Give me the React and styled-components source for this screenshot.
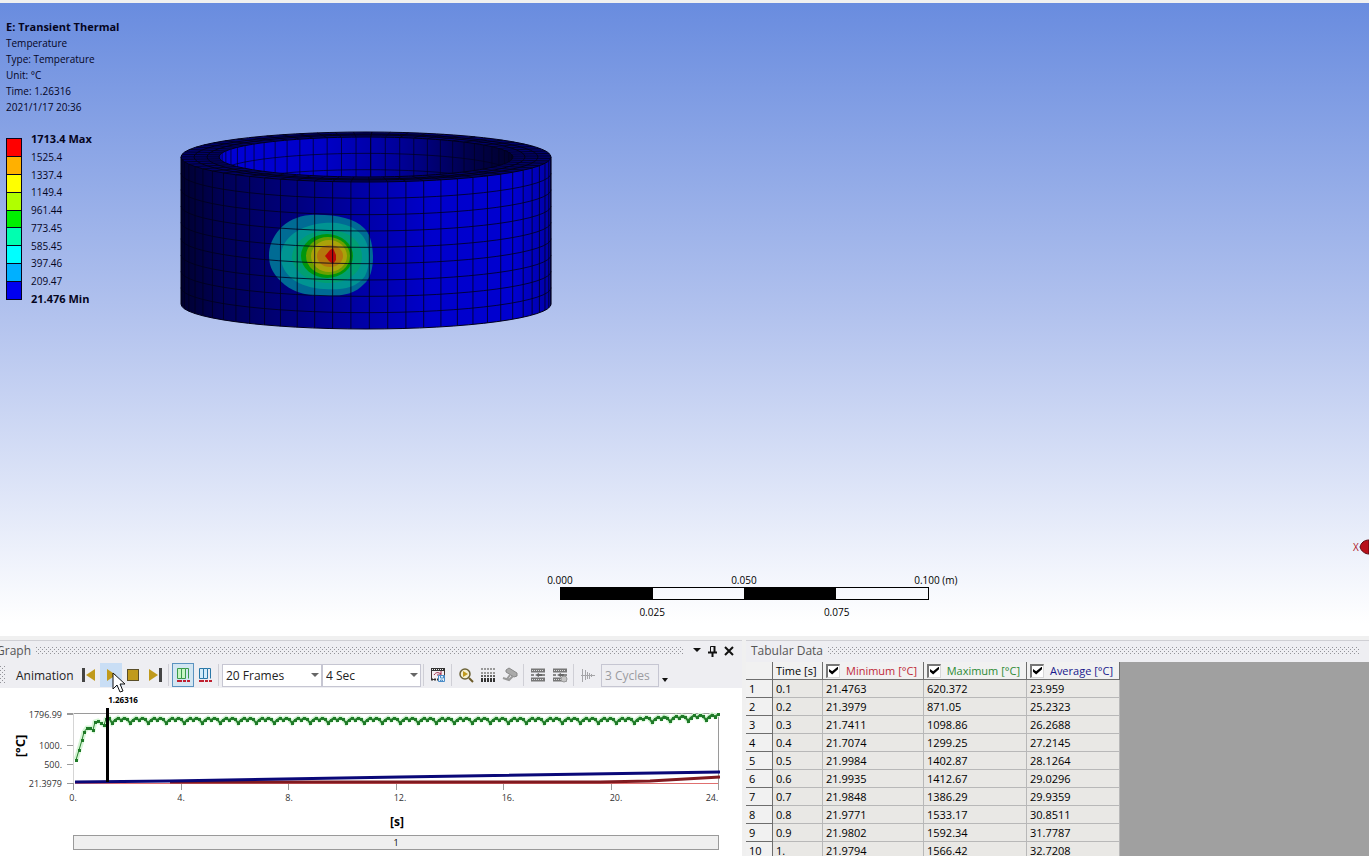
import React from "react";
import styled, { createGlobalStyle } from "styled-components";

const GlobalStyle = createGlobalStyle`
  * {
    box-sizing: border-box;
  }

  body {
    margin: 0;
    font-family: "Open Sans", "Noto Sans", sans-serif;
    font-size: 11px;
    color: #000;
  }
`;

const Page = styled.div`
  height: 100vh;
  display: flex;
  flex-direction: column;
  overflow: hidden;
  background-color: #f0f0f0;
`;

const Viewport = styled.main`
  flex: 1;
  min-height: 0;
  margin-top: 3px;
  position: relative;
  display: flex;
  flex-direction: column;
  justify-content: space-between;
  background: linear-gradient(#698cdf, #b3c3ee 50%, #ffffff 98%);
`;

const Scene = styled.div`
  display: flex;
  padding: 16px 0 0 6px;

  > svg {
    flex: none;
    margin-top: 112px;
  }
`;

const Summary = styled.div`
  width: 174px;
  flex: none;
  font-size: 10px;
  line-height: 16px;
  color: #05051e;

  h1 {
    margin: 0;
    font-size: 11px;
    line-height: 16px;
    font-weight: 700;
  }

  p {
    margin: 0;
  }
`;

const Legend = styled.div`
  display: flex;
  gap: 9px;
  margin-top: 16px;
  height: 176px;
`;

const Swatches = styled.div`
  width: 16px;
  height: 162px;
  margin-top: 7px;
  display: flex;
  flex-direction: column;
  border: 1px solid #05051e;
`;

const Swatch = styled.div`
  flex: 1;
  background-color: ${(props) => props.$color};

  & + & {
    border-top: 1px solid #05051e;
  }
`;

const Levels = styled.div`
  display: flex;
  flex-direction: column;
  justify-content: space-between;

  strong {
    font-size: 11px;
  }
`;

const Ruler = styled.div`
  width: 369px;
  margin: 0 0 17px 40.9%;
  font-size: 10px;
  line-height: 14px;
  text-align: center;
`;

const RulerTop = styled.div`
  display: flex;
  width: 552px;
  margin-left: -92px;

  span {
    width: 184px;
  }

  span:last-child {
    padding-left: 16px;
  }
`;

const RulerBar = styled.div`
  display: flex;
  height: 13px;
  border: 1px solid #000;

  i {
    flex: 1;
  }

  i:nth-child(odd) {
    background-color: #000;
  }
`;

const RulerBottom = styled.div`
  display: flex;
  padding-top: 5px;

  span {
    flex: 1;
  }
`;

const Triad = styled.svg`
  position: absolute;
  right: 0;
  bottom: 80px;
`;

const Panels = styled.div`
  flex: none;
  display: flex;
  height: 220px;
  padding-top: 4px;
  gap: 4px;
`;

const Panel = styled.section`
  flex: ${(props) => props.$grow} 1 0;
  min-width: 0;
  overflow: hidden;
  border-top: 1px solid #cfcfd4;
  background-color: #eeeef2;
`;

const PanelHeader = styled.header`
  display: flex;
  align-items: center;
  height: 21px;
  padding: 0 5px 2px ${(props) => props.$left || "0"};

  h2 {
    margin: 0;
    font-size: 12px;
    font-weight: 400;
    color: #555;
    white-space: nowrap;
  }

  h2.cut {
    margin-left: -4px;
  }
`;

const dots = "conic-gradient(at 1px 1px, transparent 270deg, #94949a 0)";

const Grip = styled.div`
  flex: 1;
  height: 7px;
  margin: 0 5px;
  background-image: ${dots}, ${dots};
  background-size: 4px 4px;
  background-position: 0 0, 2px 2px;
`;

const HeaderButton = styled.button`
  width: 16px;
  height: 16px;
  padding: 0;
  border: 0;
  background: none;

  svg {
    display: block;
    margin: auto;
  }
`;

const Toolbar = styled.div`
  display: flex;
  align-items: center;
  height: 26px;
`;

const ToolbarGrip = styled.div`
  width: 5px;
  height: 18px;
  margin-right: 11px;
  background-image: ${dots}, ${dots};
  background-size: 4px 4px;
  background-position: 0 0, 2px 2px;
`;

const ToolbarLabel = styled.span`
  width: 62px;
  font-size: 12px;
  color: #222;
`;

const ToolButton = styled.button`
  width: 22px;
  height: 24px;
  padding: 0;
  flex: none;
  position: relative;
  border: 1px solid ${(props) => (props.$pressed ? "#5c93c0" : "transparent")};
  background-color: ${(props) =>
    props.$pressed ? "#d3e6f2" : props.$hover ? "#c9def5" : "transparent"};

  > svg {
    display: block;
    margin: auto;
  }
`;

const Cursor = styled.svg`
  position: absolute;
  z-index: 2;
  left: 11px;
  top: 8px;
`;

const Separator = styled.div`
  width: 1px;
  height: 22px;
  margin: 0 3px 0 2px;
  background-color: #cfcfd6;
`;

const SelectBox = styled.div`
  position: relative;
  width: ${(props) => props.$width};
  margin-left: ${(props) => props.$left || "0"};
  flex: none;

  select {
    appearance: none;
    display: block;
    width: 100%;
    height: 23px;
    padding: 0 3px;
    border: 1px solid #c6c6d2;
    border-radius: 0;
    background-color: #fff;
    color: #222;
    font-family: inherit;
    font-size: 12px;
  }

  select:disabled {
    background-color: #eeeef2;
    color: #9b9ba0;
    opacity: 1;
  }

  svg {
    position: absolute;
    right: 3px;
    top: 9px;
    pointer-events: none;
  }
`;

const ChartArea = styled.div`
  height: 170px;
  background-color: #fff;

  > svg {
    display: block;
    width: 100%;
  }
`;

const StepBar = styled.div`
  height: 15px;
  margin: 0 23px 0 73px;
  border: 1px solid #9a9a9a;
  background-color: #efefef;
  font-size: 9px;
  line-height: 13px;
  text-align: center;
`;

const TableArea = styled.div`
  height: 196px;
  overflow: hidden;
  background-color: #a0a0a0;
`;

const DataTable = styled.table`
  table-layout: fixed;
  width: 374px;
  border-collapse: separate;
  border-spacing: 0;
  line-height: 16px;

  th,
  td {
    height: 18px;
    padding: 0 3px;
    text-align: left;
    font-weight: 400;
    white-space: nowrap;
  }

  td {
    border-right: 1px solid #b8b8b8;
    border-bottom: 1px solid #b8b8b8;
    background-color: #e9e8e5;
  }

  th {
    border-right: 1px solid #6e6e6e;
    border-bottom: 1px solid #6e6e6e;
    background-color: #f1f1f1;
  }
`;

const SeriesLabel = styled.label`
  display: flex;
  align-items: center;
  justify-content: space-between;
  padding-right: 3px;
  color: ${(props) => props.$color};
`;

const Check = styled.input`
  appearance: none;
  width: 14px;
  height: 14px;
  margin: 0;
  border: 1px solid #d8d8d8;
  border-top: 2px solid #777;
  border-left: 2px solid #777;
  background-color: #fff;

  &:checked::after {
    content: "";
    display: block;
    width: 9px;
    height: 8px;
    margin: 1px;
    background-color: #000;
    clip-path: polygon(0 30%, 35% 60%, 100% 0, 100% 35%, 35% 100%, 0 65%);
  }
`;

const legendColors = [
  "#ff0000",
  "#ffb000",
  "#ffff00",
  "#b0ff00",
  "#00f000",
  "#00ffb0",
  "#00ffff",
  "#00b0ff",
  "#0000f0",
];

const levels = ["1525.4", "1337.4", "1149.4", "961.44", "773.45", "585.45", "397.46", "209.47"];

const rows = [
  ["0.1", "21.4763", "620.372", "23.959"],
  ["0.2", "21.3979", "871.05", "25.2323"],
  ["0.3", "21.7411", "1098.86", "26.2688"],
  ["0.4", "21.7074", "1299.25", "27.2145"],
  ["0.5", "21.9984", "1402.87", "28.1264"],
  ["0.6", "21.9935", "1412.67", "29.0296"],
  ["0.7", "21.9848", "1386.29", "29.9359"],
  ["0.8", "21.9771", "1533.17", "30.8511"],
  ["0.9", "21.9802", "1592.34", "31.7787"],
  ["1.", "21.9794", "1566.42", "32.7208"],
];

// ring geometry, in the units of its own svg
const CX = 186;
const TOP = 26;
const RX = 185;
const RY = 25;
const INNER_RX = 147;
const INNER_RY = 20;
const WALL = 147;
const STEP = (Math.PI * 2) / 63;
const OFFSET = 0.018;

function meshPaths() {
  let outer = "";
  let inner = "";
  let rim = "";
  for (let i = -32; i < 32; i++) {
    const a = OFFSET + i * STEP;
    const s = Math.sin(a);
    const c = Math.cos(a);
    const x = CX + RX * s;
    const y = TOP + RY * c;
    const ix = CX + INNER_RX * s;
    const iy = TOP + INNER_RY * c;
    rim += `M${x} ${y}L${ix} ${iy}`;
    if (c > 0) outer += `M${x} ${y}v${WALL}`;
    else inner += `M${ix} ${iy}v${WALL}`;
  }
  for (let k = 1; k < 9; k++) {
    const y = TOP + (WALL / 9) * k;
    outer += `M${CX - RX} ${y}A${RX} ${RY} 0 0 0 ${CX + RX} ${y}`;
    inner += `M${CX - INNER_RX} ${y}A${INNER_RX} ${INNER_RY} 0 0 1 ${CX + INNER_RX} ${y}`;
  }
  return { outer, inner, rim };
}

function Ring() {
  const { outer, inner, rim } = meshPaths();
  return (
    <svg width="372" height="200" viewBox="0 0 372 200">
      <defs>
        <linearGradient id="wall">
          <stop offset="0" stopColor="#000030" />
          <stop offset="0.12" stopColor="#000058" />
          <stop offset="0.3" stopColor="#00007c" />
          <stop offset="0.5" stopColor="#0000a8" />
          <stop offset="0.68" stopColor="#0000cc" />
          <stop offset="0.9" stopColor="#0000d0" />
          <stop offset="1" stopColor="#0000a8" />
        </linearGradient>
        <linearGradient id="bore">
          <stop offset="0" stopColor="#0000d8" />
          <stop offset="0.35" stopColor="#0000c8" />
          <stop offset="0.6" stopColor="#00009c" />
          <stop offset="0.85" stopColor="#00004c" />
          <stop offset="1" stopColor="#00002c" />
        </linearGradient>
        <clipPath id="boreClip">
          <ellipse cx={CX} cy={TOP} rx={INNER_RX} ry={INNER_RY} />
        </clipPath>
      </defs>
      <path
        d={`M1 ${TOP}v${WALL}A${RX} ${RY} 0 0 0 371 ${TOP + WALL}V${TOP}z`}
        fill="url(#wall)"
        stroke="#000018"
      />
      <g>
        <path d="M89 125C89 106 104 86 130 84C154 83 174 87 184 97C192 104 193 120 193 126C193 138 190 148 184 153C176 162 164 165 148 165C128 165 115 162 105 154C94 145 89 136 89 125z" fill="#006b94" />
        <path d="M101 126C101 107 120 94 144 92C165 90 182 98 187 113C190 123 190 135 185 145C176 158 160 159 144 158C119 157 101 144 101 126z" fill="#009492" />
        <path d="M112 126C113 110 130 99 149 99C168 99 182 110 182 126C182 142 167 152 149 152C130 152 113 142 112 126z" fill="#009f72" />
        <ellipse cx="147" cy="125" rx="26" ry="22" fill="#00960c" />
        <ellipse cx="148" cy="125" rx="22" ry="19" fill="#6aa000" />
        <ellipse cx="149" cy="125" rx="18" ry="16" fill="#aaa20a" />
        <ellipse cx="150" cy="125" rx="13" ry="11" fill="#b4780c" />
        <path d="M145 125l5 -6l3 -2l3 7v5l-3 4l-4 -3z" fill="#bd0a06" />
      </g>
      <path d={outer} fill="none" stroke="#00001c" strokeWidth="1" strokeOpacity="0.8" />
      <ellipse cx={CX} cy={TOP} rx={RX} ry={RY} fill="#00006a" stroke="#000018" />
      <path d={rim} stroke="#000018" strokeOpacity="0.8" />
      <ellipse cx={CX} cy={TOP} rx="172" ry="23" fill="none" stroke="#000018" />
      <ellipse cx={CX} cy={TOP} rx="159" ry="22" fill="none" stroke="#000018" />
      <ellipse cx={CX} cy={TOP} rx={INNER_RX} ry={INNER_RY} fill="url(#bore)" stroke="#000018" />
      <path d={inner} clipPath="url(#boreClip)" fill="none" stroke="#00001c" strokeOpacity="0.7" />
    </svg>
  );
}

const maxStart = [
  [76, 72], [79, 62], [82, 52], [84, 44], [87, 40], [90, 40], [93, 42],
  [95, 34], [98, 33], [101, 35], [104, 37], [106, 31], [109, 30],
];
const ripple = [35, 32, 30, 32, 30, 31];

function maxSeries() {
  const points = [...maxStart];
  let i = 0;
  for (let x = 112; x < 720; x += 3) {
    const rise = x > 630 ? (x - 630) / 25 : 0;
    points.push([x, ripple[i % ripple.length] - rise]);
    i++;
  }
  return points;
}

function Chart() {
  const points = maxSeries();
  const line = points.map((p) => p.join(",")).join(" ");
  const yTicks = [[26, "1796.99"], [57, "1000."], [76, "500."], [95, "21.3979"]];
  const xTicks = [[73, 73, "0."], [181, 181, "4."], [288, 289, "8."], [396, 400, "12."], [503, 508, "16."], [611, 616, "20."], [718, 712, "24."]];
  return (
    <svg viewBox="0 0 742 147" fontSize="9" fill="#333">
      <g stroke="#9a9a9a" shapeRendering="crispEdges">
        <path d="M67 25.5H718" />
        <path d="M73.5 25V102" stroke="#d5d5d5" />
        <path d="M718.5 25V102" />
        {yTicks.map(([y]) => (
          <path key={y} d={`M67 ${y}h6`} />
        ))}
        {xTicks.map(([x]) => (
          <path key={x} d={`M${x} 95v7`} />
        ))}
      </g>
      {yTicks.map(([y, text]) => (
        <text key={text} x="62" y={y + 4} textAnchor="end">{text}</text>
      ))}
      {xTicks.map(([, x, text]) => (
        <text key={text} x={x} y="113" textAnchor="middle">{text}</text>
      ))}
      <polyline points={line} fill="none" stroke="#d5f5d5" strokeWidth="5" />
      <polyline points={line} fill="none" stroke="#25802c" strokeWidth="1" />
      <polyline points={line.slice(line.indexOf("109,"))} fill="none" stroke="#25802c" strokeWidth="2" />
      {points.map(([x, y]) => (
        <rect key={x} x={x - 1} y={Math.round(y) - 1} width="3" height="3" fill="#1f7a28" />
      ))}
      <path d="M75 95.5H718" stroke="#e07070" />
      <path d="M170 94H600L650 93L720 89" fill="none" stroke="#801a20" strokeWidth="3" />
      <path d="M75 94L170 93L400 89L720 84" fill="none" stroke="#0a0878" strokeWidth="3" />
      <rect x="106" y="20" width="3" height="74" fill="#000" />
      <text x="123" y="15" textAnchor="middle" fontWeight="700" fontSize="8" fill="#000">1.26316</text>
      <text transform="translate(25 58) rotate(-90)" textAnchor="middle" fontWeight="700" fontSize="13" fill="#000">[°C]</text>
      <text x="397" y="138" textAnchor="middle" fontWeight="700" fontSize="12" fill="#000">[s]</text>
    </svg>
  );
}

const gold = "#c09a1c";

const Icon = ({ children }) => (
  <svg width="16" height="16" viewBox="0 0 16 16" fill="none">{children}</svg>
);

const FirstIcon = () => (
  <Icon>
    <path d="M1 1h3v14H1z" fill="#444" />
    <path d="M14 2v12L5 8z" fill={gold} />
  </Icon>
);

const PlayIcon = () => (
  <Icon>
    <path d="M4 2v12l9 -6z" fill={gold} />
  </Icon>
);

const StopIcon = () => (
  <Icon>
    <rect x="2.5" y="2.5" width="11" height="11" fill={gold} stroke="#5a4e28" />
  </Icon>
);

const LastIcon = () => (
  <Icon>
    <path d="M12 1h3v14h-3z" fill="#444" />
    <path d="M2 2v12l9 -6z" fill={gold} />
  </Icon>
);

const ColumnsIcon = ({ color, fill }) => (
  <Icon>
    <path d="M2.5 1.5h4v10h-4zM6.500 1.5h4v10h-4z" stroke={color} fill={fill} />
    <path d="M10.5 1.5h3v10" stroke={color} />
    <path d="M2 14h5M8 14h3M12 14h3" stroke="#c02030" strokeWidth="2" />
  </Icon>
);

const ExportIcon = () => (
  <Icon>
    <path d="M1.5 1.5h13v11h-13z" stroke="#433" fill="#f4eef0" />
    <path d="M1 2.5h14" stroke="#333" strokeWidth="3" />
    <path d="M2 2.5h12M2 12.5h6" stroke="#eee" strokeDasharray="1 1" />
    <path d="M1 12.5h7" stroke="#333" strokeDasharray="2 1" strokeWidth="2" />
    <path d="M4 8c2 -3 4 -3 7 -1M11 4v4H7" stroke="#a02848" />
    <path d="M8.5 8.5h6v6h-6z" fill="#e4f1fb" stroke="#4a8cc8" />
    <path d="M10.5 8v3h3V8M10.5 15v-2h2v2" stroke="#4a8cc8" />
  </Icon>
);

const ZoomIcon = () => (
  <Icon>
    <circle cx="7" cy="7" r="5" stroke="#6b6238" fill="#f5efcf" strokeWidth="1.5" />
    <path d="M5 4v6l5 -3z" fill={gold} />
    <path d="M11 11l4 4" stroke="#6b5a28" strokeWidth="2" />
  </Icon>
);

const BarsIcon = () => (
  <Icon>
    <path d="M1 2h14M1 6h14" stroke="#999" strokeWidth="2" strokeDasharray="2 1" />
    <path d="M1 9h14" stroke="#666" strokeWidth="2" strokeDasharray="2 1" />
    <path d="M1 13h14" stroke="#333" strokeWidth="4" strokeDasharray="2 1" />
  </Icon>
);

const ProbeIcon = () => (
  <Icon>
    <path d="M4 3l3 -2l8 5v3l-3 1l-8 -5z" fill="#aaa" stroke="#888" />
    <path d="M8 8l-3 4M1 11l6 2l4 -4" stroke="#999" strokeWidth="2" />
  </Icon>
);

const FilmIcon = ({ badge }) => (
  <Icon>
    <path d="M1 3.5h14M1 12.5h14" stroke="#777" strokeWidth="4" />
    <path d="M2 3.5h12M2 12.5h12" stroke="#ddd" strokeDasharray="1 1" />
    <path d="M1 8h3M12 8h3" stroke="#888" strokeWidth="2" />
    <path d="M5 8l4 -2v1h3v2H9v1z" fill="#666" />
    {badge && <circle cx="12" cy="12" r="3" fill="#c4c4c4" stroke="#999" />}
  </Icon>
);

const WaveIcon = () => (
  <Icon>
    <path d="M1 8.5h14M2.5 2v13M5.5 3v10M7.5 5v7M9.5 6v6M11.5 7v3" stroke="#a5a5a8" />
  </Icon>
);

const Caret = ({ color = "#666" }) => (
  <svg width="8" height="5" viewBox="0 0 8 5">
    <path d="M0 0h8L4 4z" fill={color} />
  </svg>
);

function GraphPanel() {
  return (
    <Panel $grow={742}>
      <PanelHeader>
        <h2 className="cut">Graph</h2>
        <Grip />
        <HeaderButton aria-label="Panel menu">
          <Caret color="#111" />
        </HeaderButton>
        <HeaderButton aria-label="Pin">
          <svg width="10" height="12" viewBox="0 0 10 12" fill="none">
            <path d="M2.5 7V1.5h4V7" stroke="#111" />
            <path d="M6.5 1v6M0 7.500h9M4.500 8v4" stroke="#111" strokeWidth="2" />
          </svg>
        </HeaderButton>
        <HeaderButton aria-label="Close">
          <svg width="10" height="10" viewBox="0 0 10 10">
            <path d="M1 1l8 8M9 1l-8 8" stroke="#111" strokeWidth="2" />
          </svg>
        </HeaderButton>
      </PanelHeader>
      <Toolbar>
        <ToolbarGrip />
        <ToolbarLabel>Animation</ToolbarLabel>
        <ToolButton aria-label="First frame"><FirstIcon /></ToolButton>
        <ToolButton aria-label="Play" $hover>
          <PlayIcon />
          <Cursor width="13" height="22" viewBox="0 0 13 22">
            <path d="M1 1v16l4 -4l3 7l3 -1l-3 -7h5z" fill="#fff" stroke="#111" />
          </Cursor>
        </ToolButton>
        <ToolButton aria-label="Stop"><StopIcon /></ToolButton>
        <ToolButton aria-label="Last frame"><LastIcon /></ToolButton>
        <Separator />
        <ToolButton aria-label="Distributed" $pressed>
          <ColumnsIcon color="#3a9a4a" fill="#c8f5c4" />
        </ToolButton>
        <ToolButton aria-label="Result sets">
          <ColumnsIcon color="#2a78a8" fill="#d4ecfa" />
        </ToolButton>
        <Separator />
        <SelectBox $width="100px">
          <select aria-label="Frames" defaultValue="20">
            <option value="20">20 Frames</option>
          </select>
          <Caret />
        </SelectBox>
        <SelectBox $width="99px">
          <select aria-label="Duration" defaultValue="4">
            <option value="4">4 Sec</option>
          </select>
          <Caret />
        </SelectBox>
        <Separator />
        <ToolButton aria-label="Export video"><ExportIcon /></ToolButton>
        <Separator />
        <ToolButton aria-label="Zoom to frame"><ZoomIcon /></ToolButton>
        <ToolButton aria-label="Result grid"><BarsIcon /></ToolButton>
        <ToolButton aria-label="Probe"><ProbeIcon /></ToolButton>
        <Separator />
        <ToolButton aria-label="Insert frame"><FilmIcon /></ToolButton>
        <ToolButton aria-label="Frame options"><FilmIcon badge /></ToolButton>
        <Separator />
        <ToolButton aria-label="Waveform"><WaveIcon /></ToolButton>
        <SelectBox $width="58px" $left="2px">
          <select aria-label="Cycles" disabled defaultValue="3">
            <option value="3">3 Cycles</option>
          </select>
        </SelectBox>
        <HeaderButton aria-label="More">
          <svg width="12" height="14" viewBox="0 0 12 14">
            <path d="M1 10h6L4 14z" fill="#111" />
          </svg>
        </HeaderButton>
      </Toolbar>
      <ChartArea>
        <Chart />
        <StepBar>1</StepBar>
      </ChartArea>
    </Panel>
  );
}

function SeriesHeader({ name, color }) {
  return (
    <th>
      <SeriesLabel $color={color}>
        <Check type="checkbox" defaultChecked />
        {name}
      </SeriesLabel>
    </th>
  );
}

function TabularPanel() {
  return (
    <Panel $grow={623}>
      <PanelHeader $left="5px">
        <h2>Tabular Data</h2>
        <Grip />
      </PanelHeader>
      <TableArea>
        <DataTable>
          <colgroup>
            <col width="27" />
            <col width="50" />
            <col width="101" />
            <col width="103" />
            <col width="93" />
          </colgroup>
          <thead>
            <tr>
              <th />
              <th>Time [s]</th>
              <SeriesHeader name="Minimum [°C]" color="#c02838" />
              <SeriesHeader name="Maximum [°C]" color="#2c8a34" />
              <SeriesHeader name="Average [°C]" color="#18188c" />
            </tr>
          </thead>
          <tbody>
            {rows.map((row, i) => (
              <tr key={row[0]}>
                <th scope="row">{i + 1}</th>
                {row.map((value) => (
                  <td key={value}>{value}</td>
                ))}
              </tr>
            ))}
          </tbody>
        </DataTable>
      </TableArea>
    </Panel>
  );
}

function App() {
  return (
    <Page>
      <GlobalStyle />
      <Viewport>
        <Scene>
          <Summary>
            <h1>E: Transient Thermal</h1>
            <p>Temperature</p>
            <p>Type: Temperature</p>
            <p>Unit: °C</p>
            <p>Time: 1.26316</p>
            <p>2021/1/17 20:36</p>
            <Legend>
              <Swatches>
                {legendColors.map((color) => (
                  <Swatch key={color} $color={color} />
                ))}
              </Swatches>
              <Levels>
                <strong>1713.4 Max</strong>
                {levels.map((level) => (
                  <span key={level}>{level}</span>
                ))}
                <strong>21.476 Min</strong>
              </Levels>
            </Legend>
          </Summary>
          <Ring />
        </Scene>
        <Ruler>
          <RulerTop>
            <span>0.000</span>
            <span>0.050</span>
            <span>0.100 (m)</span>
          </RulerTop>
          <RulerBar>
            <i />
            <i />
            <i />
            <i />
          </RulerBar>
          <RulerBottom>
            <span>0.025</span>
            <span>0.075</span>
          </RulerBottom>
        </Ruler>
        <Triad width="17" height="18" viewBox="0 0 17 18">
          <text x="1" y="13" fontSize="10" fill="#b01828">X</text>
          <path d="M8 9c1 -4 4 -7 9 -7v14c-4 0 -8 -3 -9 -7z" fill="#b8101c" stroke="#5c0810" />
        </Triad>
      </Viewport>
      <Panels>
        <GraphPanel />
        <TabularPanel />
      </Panels>
    </Page>
  );
}

export default App;
